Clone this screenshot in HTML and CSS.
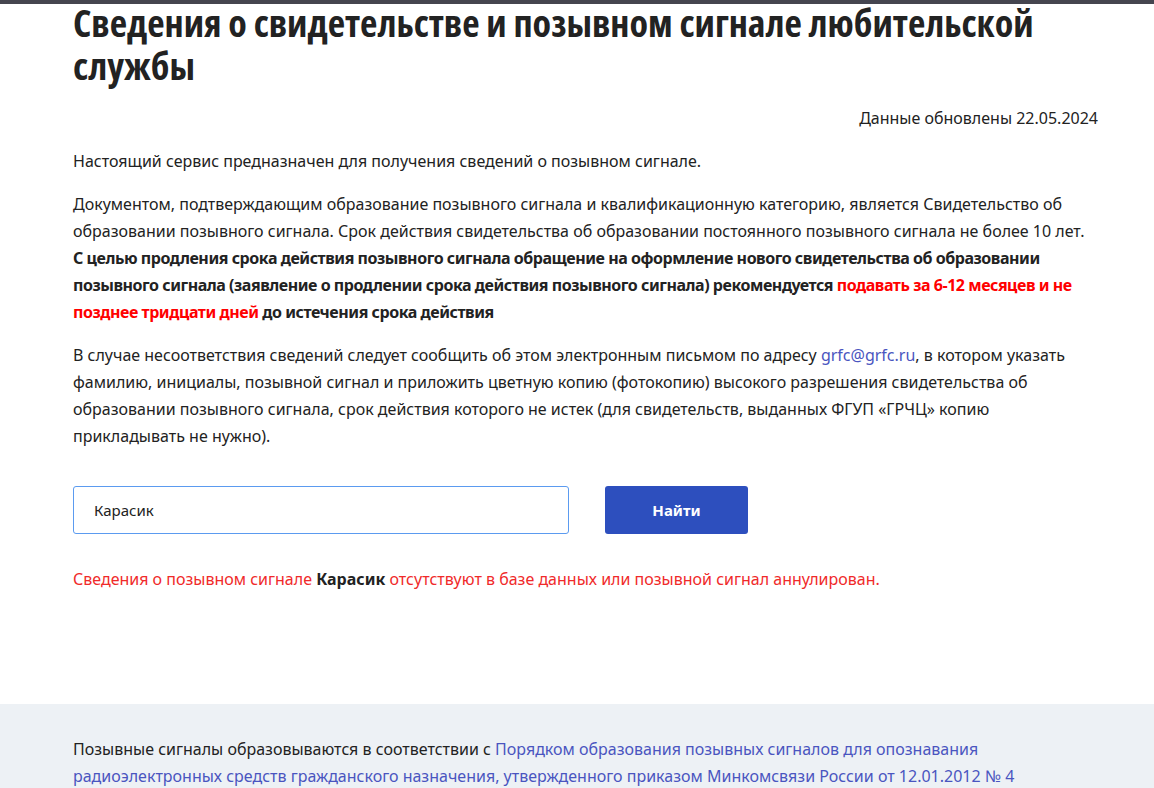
FILE: index.html
```html
<!DOCTYPE html>
<html lang="ru">
<head>
    <meta charset="UTF-8">
    <meta name="viewport" content="width=device-width, initial-scale=1.0">
    <title>Сведения о свидетельстве и позывном сигнале любительской службы</title>
    <link rel="stylesheet" href="styles.css">
</head>
<body>
    <div class="topbar"></div>
    <div class="container">
        <h1>Сведения о свидетельстве и позывном сигнале любительской службы</h1>
        <div class="updated">Данные обновлены 22.05.2024</div>
        <p>Настоящий сервис предназначен для получения сведений о позывном сигнале.</p>
        <p>Документом, подтверждающим образование позывного сигнала и квалификационную категорию, является Свидетельство об образовании позывного сигнала. Срок действия свидетельства об образовании постоянного позывного сигнала не более 10 лет.
            <b>С целью продления срока действия позывного сигнала обращение на оформление нового свидетельства об образовании позывного сигнала (заявление о продлении срока действия позывного сигнала) рекомендуется <span class="red">подавать за 6-12 месяцев и не позднее тридцати дней</span> до истечения срока действия</b></p>
        <p>В случае несоответствия сведений следует сообщить об этом электронным письмом по адресу <a href="#">grfc@grfc.ru</a>, в котором указать фамилию, инициалы, позывной сигнал и приложить цветную копию (фотокопию) высокого разрешения свидетельства об образовании позывного сигнала, срок действия которого не истек (для свидетельств, выданных ФГУП «ГРЧЦ» копию прикладывать не нужно).</p>
        <form class="search" onsubmit="return false">
            <input type="text" class="search-input" value="Карасик">
            <button class="search-button">Найти</button>
        </form>
        <div class="result">Сведения о позывном сигнале <b>Карасик</b> отсутствуют в базе данных или позывной сигнал аннулирован.</div>
    </div>
    <div class="footer">
        <div class="container">
            <p>Позывные сигналы образовываются в соответствии с <a href="#">Порядком образования позывных сигналов для опознавания радиоэлектронных средств гражданского назначения, утвержденного приказом Минкомсвязи России от 12.01.2012 № 4</a></p>
        </div>
    </div>
</body>
</html>
```

FILE: styles.css
```css
body {
    margin: 0;
    font-family: "Noto Sans", sans-serif;
    font-size: 16px;
    color: #222;
    background: #fff;
}
.topbar {
    height: 4px;
    background-color: #45454f;
}
.container {
    width: 1025px;
    margin-left: 73px;
}
h1 {
    font-family: "Open Sans", "Noto Sans", sans-serif;
    font-stretch: 77%;
    font-size: 38px;
    line-height: 43px;
    font-weight: bold;
    margin: -3px 0 0;
    color: #222;
}
.updated {
    text-align: right;
    margin-top: 18px;
    line-height: 27px;
}
p {
    line-height: 27px;
    margin: 16px 0;
}
p b {
    letter-spacing: -0.45px;
}
a {
    color: #4a55c0;
    text-decoration: none;
}
.red {
    color: #ff0000;
}
.search {
    display: flex;
    gap: 36px;
    margin-top: 36px;
}
.search-input {
    width: 496px;
    height: 48px;
    box-sizing: border-box;
    border: 1px solid #5b9bf0;
    border-radius: 3px;
    padding: 0 20px;
    font-family: inherit;
    font-size: 15px;
    color: #222;
}
.search-button {
    width: 143px;
    height: 48px;
    border: none;
    border-radius: 3px;
    background-color: #2d4fbe;
    color: #fff;
    font-family: inherit;
    font-size: 15px;
    font-weight: bold;
}
.result {
    color: #f02a2a;
    margin-top: 32px;
    line-height: 27px;
    padding-bottom: 111px;
}
.result b {
    color: #222;
}
.footer {
    background-color: #edf1f5;
    padding-top: 16px;
    padding-bottom: 40px;
}
```
